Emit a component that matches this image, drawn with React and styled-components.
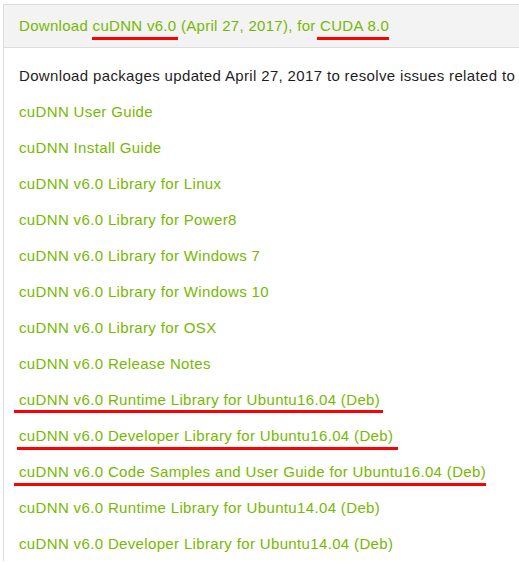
import React from "react";
import styled, { createGlobalStyle } from "styled-components";

const Global = createGlobalStyle`
  html, body { margin: 0; padding: 0; background: #fff; }
  body { font-family: "Liberation Sans", Arial, sans-serif; }
`;

const Panel = styled.div`
  margin: 4px 0 0 3px;
  border-left: 1px solid #dcdcdc;
  overflow: hidden;
`;

const Header = styled.div`
  height: 44px;
  box-sizing: border-box;
  display: flex;
  align-items: center;
  padding: 0 0 2px 15px;
  background: #f3f3f3;
  border-top: 1px solid #dcdcdc;
  border-bottom: 1px solid #dcdcdc;
  color: #76b900;
  font-size: 15px;
  letter-spacing: 0.3px;
  white-space: nowrap;
`;

const Body = styled.div`
  padding: 9px 0 0 15px;
  display: flex;
  flex-direction: column;
`;

const Row = styled.div`
  height: 36px;
  display: flex;
  align-items: center;
  font-size: 15px;
  letter-spacing: 0.35px;
  white-space: nowrap;
  color: ${(p) => (p.$plain ? "#1e1e1e" : "#76b900")};
`;

const Marked = styled.span`
  position: relative;
  &::after {
    content: "";
    position: absolute;
    left: ${(p) => p.$l}px;
    right: ${(p) => p.$r}px;
    bottom: ${(p) => p.$b}px;
    height: 3px;
    background: #ff0000;
  }
`;

const links = [
  { t: "cuDNN User Guide" },
  { t: "cuDNN Install Guide" },
  { t: "cuDNN v6.0 Library for Linux" },
  { t: "cuDNN v6.0 Library for Power8" },
  { t: "cuDNN v6.0 Library for Windows 7" },
  { t: "cuDNN v6.0 Library for Windows 10" },
  { t: "cuDNN v6.0 Library for OSX" },
  { t: "cuDNN v6.0 Release Notes" },
  { t: "cuDNN v6.0 Runtime Library for Ubuntu16.04 (Deb)", m: { l: -5, r: -3, b: -5 } },
  { t: "cuDNN v6.0 Developer Library for Ubuntu16.04 (Deb)", m: { l: -2, r: -5, b: -6 } },
  { t: "cuDNN v6.0 Code Samples and User Guide for Ubuntu16.04 (Deb)", m: { l: -5, r: 0, b: -6 } },
  { t: "cuDNN v6.0 Runtime Library for Ubuntu14.04 (Deb)" },
  { t: "cuDNN v6.0 Developer Library for Ubuntu14.04 (Deb)" },
];

export default function App() {
  return (
    <>
      <Global />
      <Panel>
        <Header>
          Download&nbsp;
          <Marked $l={-1} $r={-2} $b={-6}>cuDNN v6.0</Marked>
          &nbsp;(April 27, 2017), for&nbsp;
          <Marked $l={-3} $r={0} $b={-6}>CUDA 8.0</Marked>
        </Header>
        <Body>
          <Row $plain>Download packages updated April 27, 2017 to resolve issues related to</Row>
          {links.map((l) => (
            <Row key={l.t}>
              {l.m ? (
                <Marked $l={l.m.l} $r={l.m.r} $b={l.m.b}>{l.t}</Marked>
              ) : (
                l.t
              )}
            </Row>
          ))}
        </Body>
      </Panel>
    </>
  );
}
